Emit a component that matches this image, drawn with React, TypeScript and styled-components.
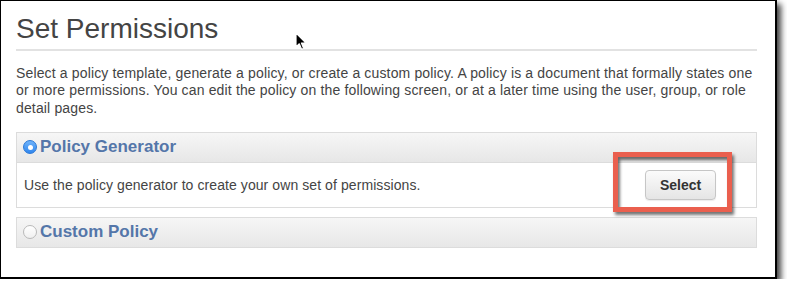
import React from "react";
import styled, { createGlobalStyle } from "styled-components";

const Global = createGlobalStyle`
  html, body { margin: 0; padding: 0; background: #fff; }
  body { font-family: "Liberation Sans", Arial, Helvetica, sans-serif; }
`;

const Frame = styled.div`
  position: relative;
  box-sizing: border-box;
  width: 777px;
  height: 279px;
  background: #fff;
  border-style: solid;
  border-color: #000;
  border-width: 1px 2px 2px 1px;
  box-shadow: 4px 4px 6px rgba(0, 0, 0, 0.75);
  padding: 12px 18px 0 15px;
`;

const Title = styled.h1`
  margin: 0;
  font-size: 28px;
  line-height: 32px;
  font-weight: normal;
  color: #444;
  padding-bottom: 4px;
  border-bottom: 2px solid #e2e2e2;
`;

const Intro = styled.p`
  margin: 14px 0 0;
  font-size: 14px;
  line-height: 17.3px;
  letter-spacing: 0.15px;
  color: #444;
`;

const Panels = styled.div`
  margin-top: 15px;
  display: flex;
  flex-direction: column;
  gap: 9px;
`;

const Panel = styled.div`
  display: flex;
  flex-direction: column;
`;

const Header = styled.div`
  box-sizing: border-box;
  height: 31px;
  display: flex;
  align-items: center;
  gap: 3px;
  padding-left: 6px;
  border: 1px solid #dcdcdc;
  background: linear-gradient(#f6f6f6, #e7e7e7);
`;

const Radio = styled.span<{ $checked?: boolean }>`
  box-sizing: border-box;
  width: 14px;
  height: 14px;
  border-radius: 50%;
  display: inline-flex;
  align-items: center;
  justify-content: center;
  ${(p) =>
    p.$checked
      ? `background: linear-gradient(#6fb3fa, #2f86ee); border: 1px solid #2a78d6;`
      : `background: linear-gradient(#ffffff, #f0f0f0); border: 1px solid #b9b9b9;`}
`;

const Dot = styled.span`
  width: 5px;
  height: 5px;
  border-radius: 50%;
  background: #fff;
`;

const HeaderLabel = styled.span`
  font-size: 17px;
  font-weight: bold;
  color: #5476a9;
`;

const Body = styled.div`
  box-sizing: border-box;
  height: 45px;
  display: flex;
  align-items: center;
  justify-content: space-between;
  padding: 0 40px 0 7px;
  border: 1px solid #dcdcdc;
  border-top: none;
  background: #fff;
`;

const BodyText = styled.span`
  font-size: 14px;
  letter-spacing: 0.08px;
  color: #444;
`;

const ButtonWrap = styled.div`
  position: relative;
  display: flex;
`;

const SelectButton = styled.button`
  box-sizing: border-box;
  width: 71px;
  height: 30px;
  margin-top: 1px;
  border: 1px solid #c6c6c6;
  border-radius: 4px;
  background: linear-gradient(#fbfbfb, #e5e5e5);
  box-shadow: 0 1px 1px rgba(0, 0, 0, 0.08);
  font-family: "Liberation Sans", Arial, Helvetica, sans-serif;
  font-size: 14px;
  font-weight: bold;
  color: #333;
  padding: 0;
`;

const Highlight = styled.div`
  position: absolute;
  top: -17px;
  left: -32px;
  right: -16px;
  bottom: -12px;
  border: 5px solid #ea5f4e;
  box-shadow: 2px 3px 3px rgba(0, 0, 0, 0.55),
    inset 2px 3px 3px rgba(0, 0, 0, 0.55);
  pointer-events: none;
`;

const Cursor = styled.svg`
  position: absolute;
  left: 293px;
  top: 31px;
`;

export default function App() {
  return (
    <>
      <Global />
      <Frame>
        <Title>Set Permissions</Title>
        <Intro>
          Select a policy template, generate a policy, or create a custom
          policy. A policy is a document that formally states one or more
          permissions. You can edit the policy on the following screen, or at a
          later time using the user, group, or role detail pages.
        </Intro>
        <Panels>
          <Panel>
            <Header>
              <Radio $checked>
                <Dot />
              </Radio>
              <HeaderLabel>Policy Generator</HeaderLabel>
            </Header>
            <Body>
              <BodyText>
                Use the policy generator to create your own set of permissions.
              </BodyText>
              <ButtonWrap>
                <SelectButton>Select</SelectButton>
                <Highlight />
              </ButtonWrap>
            </Body>
          </Panel>
          <Panel>
            <Header>
              <Radio />
              <HeaderLabel>Custom Policy</HeaderLabel>
            </Header>
          </Panel>
        </Panels>
        <Cursor width="14" height="20" viewBox="0 0 14 20">
          <path
            d="M2 1 L2 15 L5.3 11.8 L7.6 17.2 L9.6 16.3 L7.4 11.1 L12 11.1 Z"
            fill="#000"
            stroke="#fff"
            strokeWidth="1.2"
            strokeLinejoin="round"
          />
        </Cursor>
      </Frame>
    </>
  );
}
